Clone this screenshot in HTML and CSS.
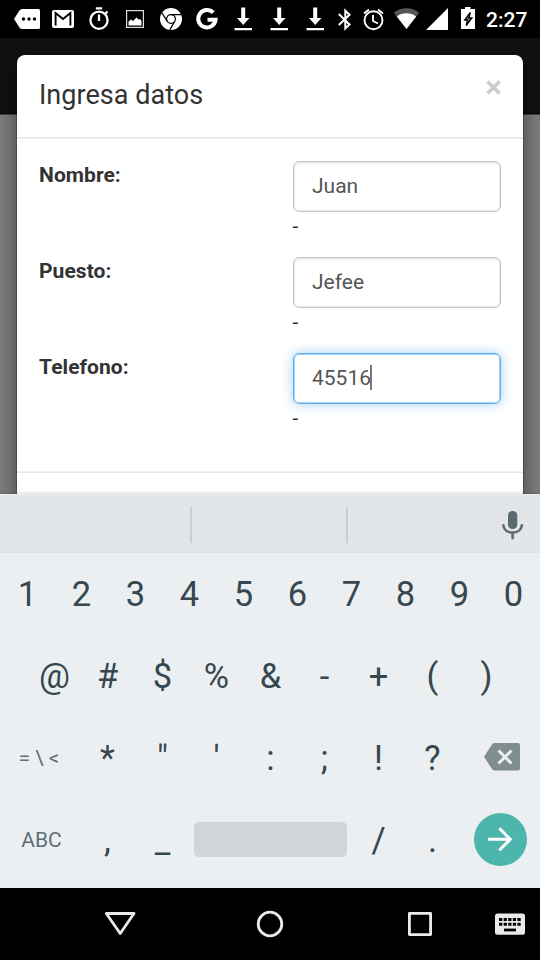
FILE: index.html
```html
<!DOCTYPE html>
<html lang="es">
<head>
<meta charset="utf-8">
<title>Ingresa datos</title>
<link rel="stylesheet" href="styles.css">
</head>
<body>
<header class="status">
  <svg width="36" height="38" viewBox="9 0 36 38"><path d="M22 9h16.500a1.500 1.500 0 0 1 1.500 1.500v17a1.500 1.500 0 0 1-1.500 1.500H22q-1.500 0-2.500-1.500L14 19l5.500-8.500Q20.500 9 22 9z" fill="#fff"/><g fill="#000"><circle cx="23.500" cy="19" r="1.700"/><circle cx="29" cy="19" r="1.700"/><circle cx="34.500" cy="19" r="1.700"/></g></svg>
  <svg width="36" height="38" viewBox="45 0 36 38"><rect x="52" y="10" width="22" height="18" rx="2" fill="#fff"/><path d="M55.600 25.500V13L63 19l7.400-6v12.500" fill="none" stroke="#000" stroke-width="1.900"/></svg>
  <svg width="36" height="38" viewBox="81 0 36 38" fill="none" stroke="#fff" stroke-width="2.300"><circle cx="99" cy="20.200" r="8.600"/><path d="M95.800 8.300h6.400M99 14.500v6.500M105.500 13.500l2-2"/></svg>
  <svg width="36" height="38" viewBox="117 0 36 38"><rect x="126.600" y="10.600" width="16.800" height="16.800" fill="none" stroke="#ddd" stroke-width="1.200"/><path d="M128.500 25.500v-4l2.500-2 2 1.500 3.500-3.500 2 2 1.500-.5 1.500 2v4.500z" fill="#fff"/></svg>
  <svg width="36" height="38" viewBox="153 0 36 38"><circle cx="171" cy="19" r="11" fill="#fff"/><g fill="none" stroke="#000" stroke-width="1.200"><circle cx="171" cy="19" r="4.400"/><path d="M171 14.600h10.200M167.200 21.200l-5.400-8.300M174.800 21.200l-5 8.700"/></g></svg>
  <svg width="36" height="38" viewBox="189 0 36 38"><path d="M213.200 12.700A8.700 8.700 0 1 0 215.600 19.800H207.500" fill="none" stroke="#fff" stroke-width="4"/></svg>
  <svg width="36" height="38" viewBox="225 0 36 38" fill="#fff"><path d="M241.200 7.500h4V18h4.300L243.200 25 237 18h4.200zM234.500 28h17.500v2.300h-17.500z"/></svg>
  <svg width="36" height="38" viewBox="225 0 36 38" fill="#fff"><path d="M241.200 7.500h4V18h4.300L243.200 25 237 18h4.200zM234.500 28h17.500v2.300h-17.500z"/></svg>
  <svg width="36" height="38" viewBox="225 0 36 38" fill="#fff"><path d="M241.200 7.500h4V18h4.300L243.200 25 237 18h4.200zM234.500 28h17.500v2.300h-17.500z"/></svg>
  <svg width="24" height="38" viewBox="333 0 24 38" fill="none" stroke="#fff" stroke-width="2"><path d="M338.800 14l10.700 10.500-4.200 4V10.700l4.200 4L338.800 25"/></svg>
  <svg width="32" height="38" viewBox="357 0 32 38" fill="none" stroke="#fff" stroke-width="1.900"><circle cx="373.500" cy="20.200" r="9"/><path d="M364 13.500l5-4M383 13.500l-5-4M373 15v6l5 2.500"/></svg>
  <svg width="34" height="38" viewBox="389 0 34 38"><path d="M406.500 29L393.800 12.700a20.500 20.500 0 0 1 25.400 0z" fill="#555"/><path d="M406.500 29L396.800 16.600a16 16 0 0 1 19.400 0z" fill="#fff"/></svg>
  <svg width="28" height="38" viewBox="423 0 28 38"><path d="M448 8v22h-22z" fill="#fff"/></svg>
  <svg width="32" height="38" viewBox="451 0 32 38"><path d="M465 7h5.500v2h4.500v20h-14V9h4z" fill="#fff"/><path d="M470.300 12.500l-5.500 7.500h2.700l-1.300 5.500 5.600-7.500h-2.900z" fill="#888" stroke="#000" stroke-width="1.400"/></svg>
  <time class="clock">2:27</time>
</header>

<main class="page">
  <section class="modal">
    <div class="modal-header">
      <h1>Ingresa datos</h1>
      <button class="close" aria-label="Cerrar"><svg width="16" height="16" viewBox="0 0 16 16"><path d="M2.500 1.500l12 12M14.500 1.500l-12 12" stroke="#ccc" stroke-width="3.800"/></svg></button>
    </div>
    <div class="modal-body">
      <div class="row"><label>Nombre:</label><div class="field"><div class="input">Juan</div><span>-</span></div></div>
      <div class="row"><label>Puesto:</label><div class="field"><div class="input">Jefee</div><span>-</span></div></div>
      <div class="row"><label>Telefono:</label><div class="field"><div class="input focus">45516<i class="caret"></i></div><span>-</span></div></div>
    </div>
    <div class="modal-footer"></div>
  </section>
</main>

<section class="suggest">
  <div></div><div></div><div></div>
  <svg class="mic" width="24" height="32" viewBox="501 509 24 32"><rect x="508" y="511" width="9.300" height="18" rx="4.600" fill="#5b6a70"/><path d="M503.200 524.300c.3 5.400 4.500 8.300 9.400 8.300s9.100-2.900 9.400-8.300M512.600 532v7.300" fill="none" stroke="#5b6a70" stroke-width="2.500"/></svg>
</section>

<section class="keys">
  <div class="krow"><b>1</b><b>2</b><b>3</b><b>4</b><b>5</b><b>6</b><b>7</b><b>8</b><b>9</b><b>0</b></div>
  <div class="krow inset"><b>@</b><b class="hash">#</b><b>$</b><b>%</b><b>&amp;</b><b>-</b><b>+</b><b>(</b><b>)</b></div>
  <div class="krow"><b class="mode sym">= \ &lt;</b><b class="hash">*</b><b>"</b><b>'</b><b>:</b><b>;</b><b>!</b><b>?</b>
    <b class="side back"><svg width="36" height="28" viewBox="0 0 36 28"><path d="M10.500 0H34q2 0 2 2v23.500q0 2-2 2H10.500q-1.500 0-2.300-1.300L0 13.800 8.200 1.300Q9 0 10.500 0z" fill="#808c90"/><path d="M14.500 7.500l13 13M27.500 7.500l-13 13" stroke="#eceff1" stroke-width="3"/></svg></b></div>
  <div class="krow"><b class="mode">ABC</b><b class="hash">,</b><b>_</b><b class="space"><i></i></b><b>/</b><b>.</b>
    <b class="side"><svg width="53" height="53" viewBox="0 0 53 53"><circle cx="26.500" cy="26.500" r="26.500" fill="#4db6ac"/><path d="M14 26.300h21.500M25.300 15.300l11 11-11 11" fill="none" stroke="#fff" stroke-width="3"/></svg></b></div>
</section>

<nav class="nav">
  <svg width="540" height="72" viewBox="0 888 540 72" fill="none" stroke="#eaeaea" stroke-width="2.800" stroke-linejoin="round">
    <path d="M106.300 913.500h27.700L120.200 933.500z"/>
    <circle cx="270" cy="924" r="11.800"/>
    <rect x="409.400" y="913.400" width="21.200" height="21.200"/>
    <rect x="495" y="913.500" width="30" height="21.200" rx="2.500" fill="#eaeaea" stroke="none"/>
    <path d="M499 919.500h22M499 924.200h22" stroke="#000" stroke-width="3" stroke-dasharray="3.300 1.300" stroke-linejoin="miter"/>
    <path d="M504 930h12" stroke="#000" stroke-width="2.800"/>
  </svg>
</nav>
</body>
</html>
```
FILE: styles.css
```css
* { box-sizing: border-box; }
body {
  margin: 0;
  width: 540px;
  height: 960px;
  overflow: hidden;
  font-family: Roboto, sans-serif;
  font-size: 21px;
  line-height: 30px;
  color: #333;
  background: #000;
}
svg { display: block; flex: none; }

.status { display: flex; height: 38px; padding-left: 9px; background: #000; }
.clock { margin-left: 3px; color: #fff; font-size: 21px; font-weight: 500; line-height: 40px; }

.page {
  height: 456px;
  padding: 17px 17px 0;
  overflow: hidden;
  background: linear-gradient(#111 75px, #080808 75px, #080808 76px, #7f7f7f 77px);
}
.modal {
  height: 520px;
  background: #fff;
  border-radius: 8px;
  box-shadow: 0 0 0 1px rgba(0, 0, 0, .2), 0 7px 22px rgba(0, 0, 0, .5);
}
.modal-header {
  display: flex;
  justify-content: space-between;
  height: 84px;
  padding: 22px 22px 0 22px;
  background: linear-gradient(#e5e5e5 50%, #f1f1f1 50%) bottom / 100% 2px no-repeat;
}
h1 { margin: 0; font-size: 27px; font-weight: 400; line-height: 36px; letter-spacing: .03px; }
.close { height: 16px; margin-top: 3px; padding: 0; border: 0; background: none; }

.modal-body { height: 332px; padding: 22px 22px 0; }
.row { display: flex; height: 96px; }
.row label { width: 253.500px; font-weight: 700; line-height: 29px; letter-spacing: .06px; }
.field { width: 208.500px; }
.field span { display: block; line-height: 28px; }
.input {
  display: flex;
  align-items: center;
  height: 51px;
  padding: 0 18px 2px 18.500px;
  color: #555;
  border: 1px solid #c8c8c8;
  border-radius: 6px;
  box-shadow: inset 0 0 0 1px #e6e6e6, inset 0 2px 2px rgba(0, 0, 0, .06);
}
.focus {
  border-color: #66afe9;
  box-shadow: inset 0 0 0 1px #a6d0f2, 0 0 12px rgba(102, 175, 233, .6);
}
.caret { width: 2px; height: 25px; margin-left: -1px; background: #777; }
.modal-footer { height: 60px; background: linear-gradient(#f1f1f1 50%, #e5e5e5 50%) top / 100% 2px no-repeat; }

.suggest {
  display: flex;
  align-items: center;
  height: 61px;
  padding-left: 36px;
  background: #e2e6e9;
  border-top: 1px solid #eceff0;
  border-bottom: 1px solid #f7f9fa;
  box-shadow: 0 -1px 3px rgba(0, 0, 0, .15);
  position: relative;
}
.suggest div { width: 156px; height: 36px; border-right: 2px solid #cacfd2; }
.suggest div:nth-child(3) { width: 153px; border: 0; }

.keys { height: 333px; background: #eceff1; color: #37474f; }
.krow { display: flex; height: 82px; font-size: 34.500px; line-height: 79px; }
.krow b { width: 54px; padding-left: 1px; font-weight: 400; text-align: center; }
.inset { padding-left: 27px; }
.krow .hash { padding: 0 1px 0 0; }
.krow .mode { width: 81px; padding-left: 2px; font-size: 21px; color: #5f6e74; }
.krow .sym { padding: 0 3px 0 0; font-size: 20.500px; }
.krow .side { display: flex; align-items: center; justify-content: center; width: 81px; height: 77px; padding-left: 1px; }
.krow .back { height: 76px; padding-left: 4px; }
.krow .space { display: flex; align-items: center; justify-content: center; width: 162px; height: 77px; padding: 0; }
.space i { width: 153px; height: 35px; border-radius: 5px; background: #d0d5d8; }

.nav { height: 72px; background: #000; }
```
